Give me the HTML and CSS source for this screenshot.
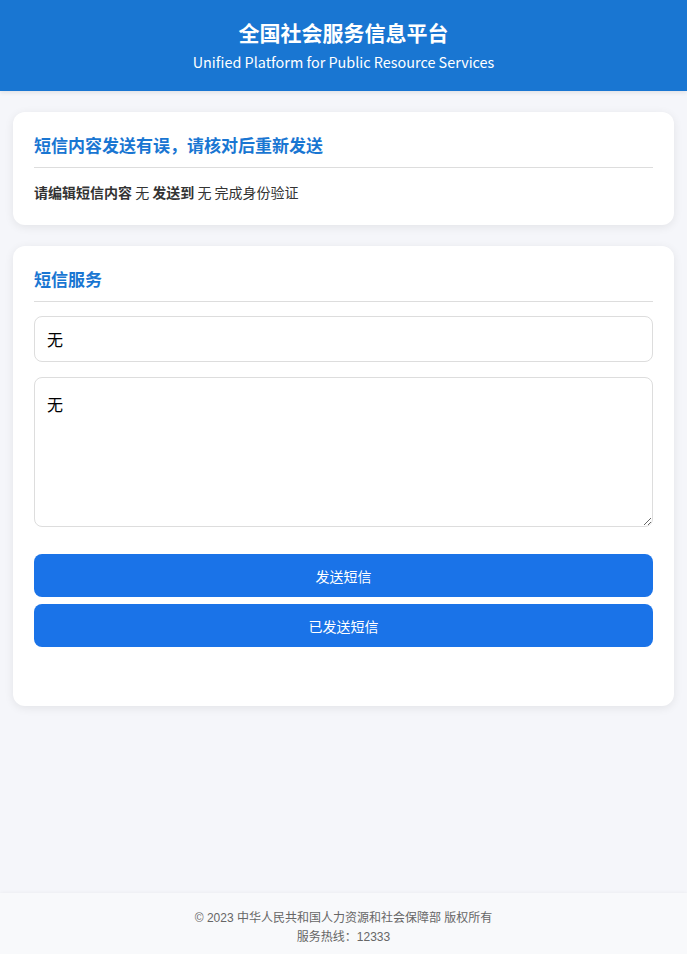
FILE: index.html
```html
<!doctype html>
<html>
    <head>
        <meta charset="utf-8">
        <title>全国社会服务信息平台</title>
        <link rel="stylesheet" href="styles.css">
    </head>
    <body>
        <div class="header">
            <h1>全国社会服务信息平台</h1>
            <p>Unified Platform for Public Resource Services</p>
        </div>

        <div class="main">
            <div class="card">
                <h2>短信内容发送有误，请核对后重新发送</h2>
                <p class="tip"><strong>请编辑短信内容</strong> 无 <strong>发送到</strong> 无 完成身份验证</p>
            </div>

            <div class="card card-form">
                <h2>短信服务</h2>
                <input class="field" type="text" value="无">
                <textarea class="field area">无</textarea>
                <div class="actions">
                    <button class="btn">发送短信</button>
                    <button class="btn">已发送短信</button>
                </div>
            </div>
        </div>

        <div class="footer">
            <p>© 2023 中华人民共和国人力资源和社会保障部 版权所有</p>
            <p>服务热线：12333</p>
        </div>
    </body>
</html>
```

FILE: styles.css
```css
* {
    box-sizing: border-box;
    font-family: "Microsoft YaHei", "Noto Sans CJK SC", sans-serif;
}

body {
    margin: 0;
    padding: 0;
    background: #f5f6fa;
    min-height: 100vh;
    display: flex;
    flex-direction: column;
}

.header {
    background: #1976d2;
    color: #fff;
    text-align: center;
    padding: 18px 0;
    box-shadow: 0 2px 4px rgba(0, 0, 0, 0.08);
}

.header h1 {
    margin: 0 0 5px;
    font-size: 21px;
    line-height: 28px;
    font-weight: bold;
}

.header p {
    margin: 0;
    font-size: 14.4px;
    line-height: 22px;
}

.main {
    flex: 1;
    padding: 21px 13px;
    display: flex;
    flex-direction: column;
    gap: 21px;
}

.card {
    background: #fff;
    border-radius: 12px;
    padding: 21px 21px 23px;
    box-shadow: 0 2px 10px rgba(0, 0, 0, 0.08);
}

.card h2 {
    margin: 0 0 14px;
    padding-bottom: 10px;
    border-bottom: 1px solid #ddd;
    color: #1976d2;
    font-size: 17px;
    line-height: 24px;
}

.tip {
    margin: 1px 0 0;
    font-size: 14px;
    line-height: 20px;
    color: #333;
}

.card-form {
    display: flex;
    flex-direction: column;
    padding-bottom: 59px;
}

.field {
    display: block;
    width: 100%;
    height: 46px;
    padding: 12px;
    border: 1px solid #ddd;
    border-radius: 8px;
    font-size: 16px;
    color: #000;
    background: #fff;
    margin-bottom: 15px;
}

.area {
    height: 150px;
    padding: 14px 12px;
    margin-bottom: 27px;
    resize: vertical;
}

.actions {
    display: flex;
    flex-direction: column;
    gap: 7px;
}

.btn {
    height: 43px;
    border: none;
    border-radius: 8px;
    background: #1a73e8;
    color: #fff;
    font-size: 14px;
}

.footer {
    background: #f8f9fb;
    box-shadow: 0 -1px 3px rgba(0, 0, 0, 0.03);
    text-align: center;
    padding: 16px 0 7px;
}

.footer p {
    margin: 0;
    font-family: "Liberation Sans", "Noto Sans CJK SC", sans-serif;
    font-size: 12px;
    line-height: 19px;
    color: #666;
}
```
